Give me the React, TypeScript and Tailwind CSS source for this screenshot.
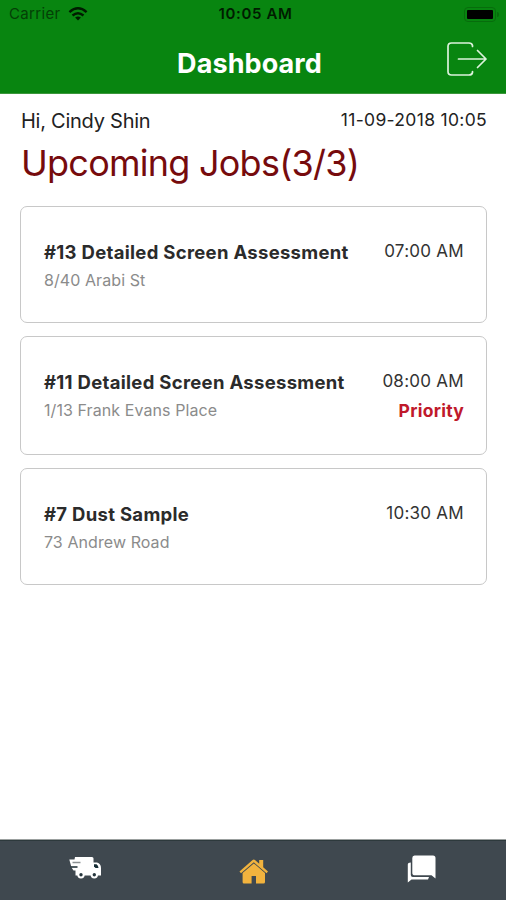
import React from "react";

type Job = { title: string; address: string; time: string; priority?: boolean; box: string };

const jobs: Job[] = [
  { title: "#13 Detailed Screen Assessment", address: "8/40 Arabi St", time: "07:00 AM", box: "h-[117px]" },
  { title: "#11 Detailed Screen Assessment", address: "1/13 Frank Evans Place", time: "08:00 AM", priority: true, box: "mt-[13px] h-[119px]" },
  { title: "#7 Dust Sample", address: "73 Andrew Road", time: "10:30 AM", box: "mt-[13px] h-[117px]" },
];

function Wifi() {
  return (
    <svg className="ml-[7px] mt-[7px] h-[14px] w-[20px]" viewBox="0 0 20 14" fill="none" stroke="#001c00" strokeWidth="2.4">
      <path d="M1.4 5.1Q10-2.4 18.6 5.1" />
      <path d="M4.5 8.5Q10 3.8 15.5 8.5" />
      <path d="M10 13.4 7.1 10.6Q10 8.3 12.9 10.6Z" fill="#001c00" stroke="none" />
    </svg>
  );
}

function LogoutIcon() {
  return (
    <svg className="h-[36px] w-[42px]" viewBox="0 0 42 36" fill="none" stroke="#dcf2dc" strokeWidth="1.7" strokeLinecap="round" strokeLinejoin="round">
      <path d="M26.5 5.5V4.5Q26 2 23 2H5.5Q2 2 2 5.500V30.500Q2 34 5.500 34H23Q26 34 26.500 31.500V30.500" />
      <path d="M12.500 18H40M31.500 9.500 40 18 31.500 26.500" />
    </svg>
  );
}

function TruckIcon() {
  return (
    <svg className="h-[24px] w-[34px]" viewBox="0 0 34 24" fill="#fff">
      <path d="M6 1H23Q24.500 1 24.500 2.500V6.500H28Q32 7.500 32 12V19.500H6.500V14.500H4.500L2.500 11.500L0.300 3.600H5.500Z" />
      <path d="M25 8.300H27.500Q29.300 9.300 29.500 12H26.500L25 10.500Z" fill="#152c34" />
      <path d="M3.500 6.500H11.500" stroke="#8b9092" strokeWidth="1.500" />
      <path d="M1.500 11H8.500" stroke="#26363d" strokeWidth="1.600" />
      <circle cx="12" cy="18.700" r="2.700" fill="#26363d" stroke="#fff" strokeWidth="2" />
      <circle cx="25.300" cy="18.700" r="2.700" fill="#26363d" stroke="#fff" strokeWidth="2" />
    </svg>
  );
}

function HomeIcon() {
  return (
    <svg className="h-[26px] w-[30px]" viewBox="0 0 30 26" fill="#f2b33e">
      <path d="M13.600 1Q14.800 0 16 1L20.200 4.700V1H24.200V8.300L29 12.500 27.500 14.300 14.800 3.300 2 14.300 0.500 12.500Z" />
      <path d="M14.800 4.400 26 14.100V23Q26 24.500 24.500 24.500H17V17H12.600V24.500H5Q3.600 24.500 3.600 23V14.100Z" />
    </svg>
  );
}

function ChatIcon() {
  return (
    <svg className="h-[28px] w-[30px]" viewBox="0 0 30 28" fill="#fff">
      <path d="M3.800 7.500V20Q3.800 22 5.800 22H22L21 24.500H4.500L0.800 27.500V9.500Q0.800 7.500 3.800 7.500Z" />
      <path d="M7.500 0.500H26Q28.500 0.500 28.500 3V23.500L24.500 20.300H8Q5.300 20.300 5.300 18V3Q5.300 0.500 7.500 0.500Z" />
    </svg>
  );
}

export default function App() {
  return (
    <div className="flex h-[900px] w-[506px] flex-col overflow-hidden bg-white font-['Inter',sans-serif]">
      <header className="h-[94px] border-b border-[#3b963b] bg-[#088510]">
        <div className="grid h-[28px] grid-cols-3 text-[15px] leading-[28px] text-[#001c00]">
          <div className="flex pl-[9px] tracking-[0.350px] text-[#043f06]">Carrier<Wifi /></div>
          <div className="pl-[5px] text-center font-semibold tracking-[0.650px]">10:05 AM</div>
          <div className="flex items-center justify-end pr-[7px]">
            <div className="h-[15px] w-[32px] rounded-[4px] border border-[#076d0c] p-[2px]"><div className="h-full w-full rounded-[1px] bg-black" /></div>
            <div className="ml-[1px] h-[5px] w-[2px] rounded-r bg-[#076d0c]" />
          </div>
        </div>
        <div className="grid h-[65px] grid-cols-[1fr_auto_1fr] items-center">
          <div />
          <h1 className="pr-[7px] pt-[7px] text-[27px] font-bold leading-[34px] tracking-[0.100px] text-white">Dashboard</h1>
          <div className="flex justify-end pb-[3px] pr-[18px]"><LogoutIcon /></div>
        </div>
      </header>
      <main className="flex-1 pl-[20px] pr-[19px] pt-[14px]">
        <div className="flex justify-between pl-[1px] text-[#222]">
          <p className="text-[20px] leading-[26px] tracking-[-0.250px]">Hi, Cindy Shin</p>
          <p className="text-[17.500px] leading-[24px] tracking-[0.320px]">11-09-2018 10:05</p>
        </div>
        <h2 className="mt-[5px] pl-[1px] text-[36px] leading-[48px] tracking-[-0.750px] text-[#760b0d]">Upcoming Jobs(3/3)</h2>
        <div className="mt-[19px]">
          {jobs.map((j) => (
            <section key={j.title} className={`flex justify-between rounded-[7px] border-[1.500px] border-[#c8c8c8] pl-[23px] pr-[22px] pt-[33px] ${j.box}`}>
              <div>
                <h3 className="text-[18.500px] font-bold leading-[24px] tracking-[0.300px] text-[#2b2b2b]">{j.title}</h3>
                <p className="mt-[5px] text-[16px] leading-[22px] tracking-[0.080px] text-[#8b8b8b]">{j.address}</p>
              </div>
              <div className="text-right">
                <p className="text-[17px] leading-[23px] tracking-[0.270px] text-[#333]">{j.time}</p>
                {j.priority && <p className="mt-[6px] text-[17.500px] font-bold leading-[23px] tracking-[0.250px] text-[#c0192b]">Priority</p>}
              </div>
            </section>
          ))}
        </div>
      </main>
      <nav className="h-[61px] border-t border-[#9ba09f] bg-[#3f484f]">
        <div className="grid h-[60px] grid-cols-3 border-t border-[#2d393c] pl-[2px] pt-[14px]">
          <a className="flex justify-center pt-[1px]"><TruckIcon /></a>
          <a className="flex justify-center pt-[4px]"><HomeIcon /></a>
          <a className="flex justify-center"><ChatIcon /></a>
        </div>
      </nav>
    </div>
  );
}
